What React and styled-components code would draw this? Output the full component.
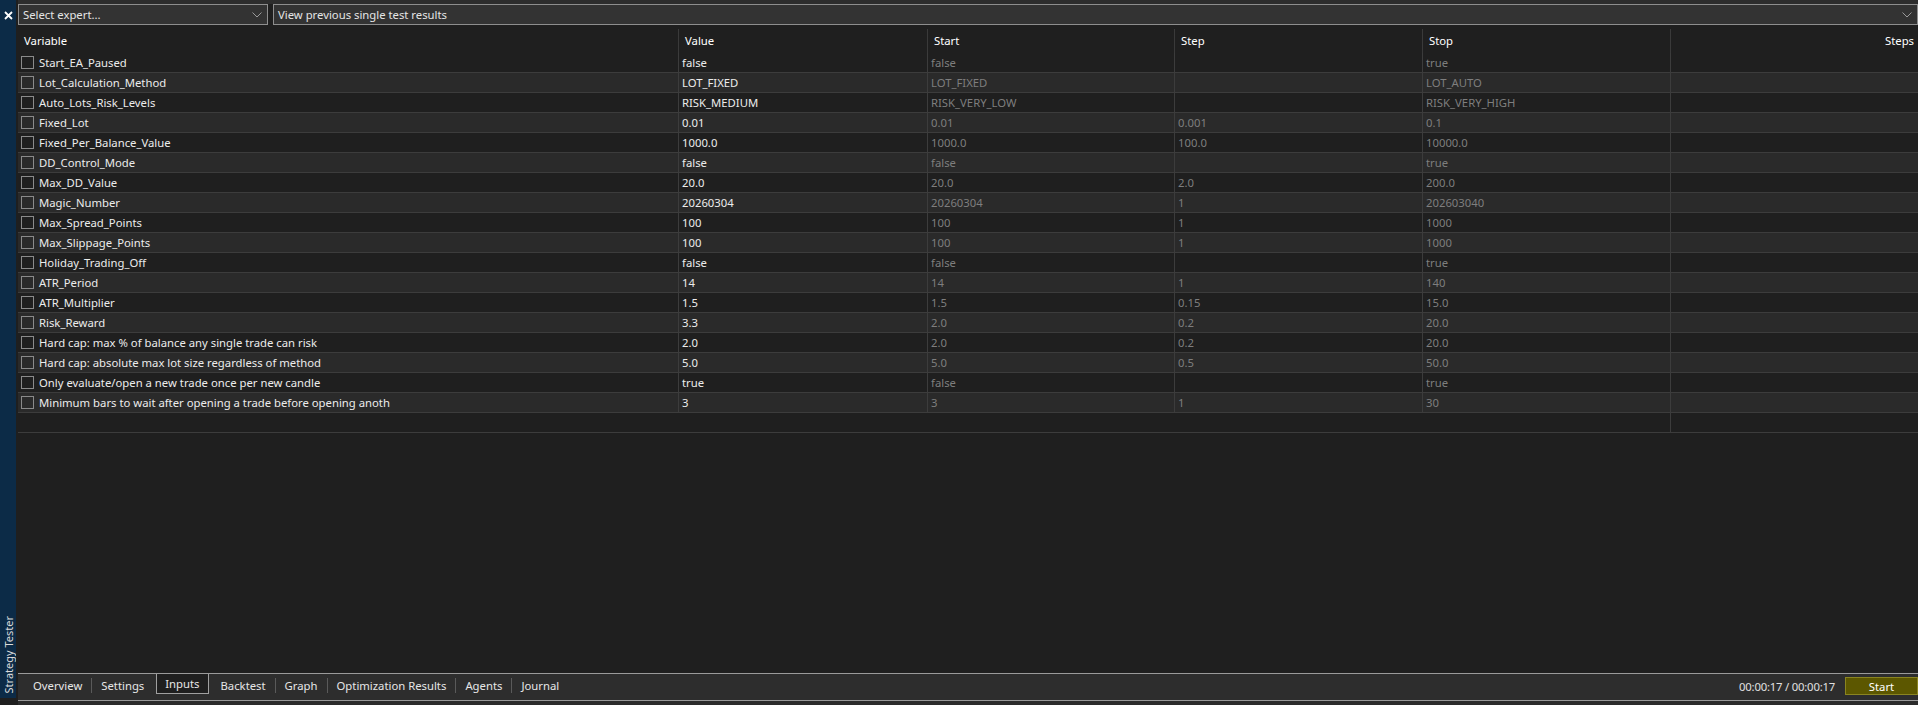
import React from "react";
import styled, { createGlobalStyle } from "styled-components";

const GlobalStyle = createGlobalStyle`
  html, body {
    margin: 0;
    padding: 0;
    background: #1f1f1f;
    overflow: hidden;
  }
  body {
    font-family: "Noto Sans", "Open Sans", sans-serif;
    font-size: 11.3px;
    color: #e8e8e8;
  }
`;

const COLS = "660px 249px 247px 248px 248px 1fr";

const rows = [
  ["Start_EA_Paused", "false", "false", "", "true"],
  ["Lot_Calculation_Method", "LOT_FIXED", "LOT_FIXED", "", "LOT_AUTO"],
  ["Auto_Lots_Risk_Levels", "RISK_MEDIUM", "RISK_VERY_LOW", "", "RISK_VERY_HIGH"],
  ["Fixed_Lot", "0.01", "0.01", "0.001", "0.1"],
  ["Fixed_Per_Balance_Value", "1000.0", "1000.0", "100.0", "10000.0"],
  ["DD_Control_Mode", "false", "false", "", "true"],
  ["Max_DD_Value", "20.0", "20.0", "2.0", "200.0"],
  ["Magic_Number", "20260304", "20260304", "1", "202603040"],
  ["Max_Spread_Points", "100", "100", "1", "1000"],
  ["Max_Slippage_Points", "100", "100", "1", "1000"],
  ["Holiday_Trading_Off", "false", "false", "", "true"],
  ["ATR_Period", "14", "14", "1", "140"],
  ["ATR_Multiplier", "1.5", "1.5", "0.15", "15.0"],
  ["Risk_Reward", "3.3", "2.0", "0.2", "20.0"],
  ["Hard cap: max % of balance any single trade can risk", "2.0", "2.0", "0.2", "20.0"],
  ["Hard cap: absolute max lot size regardless of method", "5.0", "5.0", "0.5", "50.0"],
  ["Only evaluate/open a new trade once per new candle", "true", "false", "", "true"],
  ["Minimum bars to wait after opening a trade before opening anoth", "3", "3", "1", "30"],
];

const tabs = ["Overview", "Settings", "Inputs", "Backtest", "Graph", "Optimization Results", "Agents", "Journal"];
const ACTIVE = "Inputs";

export default function App() {
  return (
    <>
      <GlobalStyle />
      <Page>
        <Sidebar>
          <CloseBtn>
            <svg width="9" height="9" viewBox="0 0 9 9">
              <path d="M1 1 L8 8 M8 1 L1 8" stroke="#ffffff" strokeWidth="1.8" />
            </svg>
          </CloseBtn>
          <SideLabel>Strategy Tester</SideLabel>
        </Sidebar>

        <Main>
          <Toolbar>
            <Select width="250px">
              <span>Select expert...</span>
              <Chevron />
            </Select>
            <Select grow>
              <span>View previous single test results</span>
              <Chevron />
            </Select>
          </Toolbar>

          <Table>
            <HeaderRow>
              <HeadCell first>Variable</HeadCell>
              <HeadCell>Value</HeadCell>
              <HeadCell>Start</HeadCell>
              <HeadCell>Step</HeadCell>
              <HeadCell>Stop</HeadCell>
              <HeadCell right>Steps</HeadCell>
            </HeaderRow>

            {rows.map((r, i) => (
              <Row key={r[0]} alt={i % 2 === 1}>
                <VarCell>
                  <Check />
                  {r[0]}
                </VarCell>
                <Cell>{r[1]}</Cell>
                <Cell dim>{r[2]}</Cell>
                <Cell dim>{r[3]}</Cell>
                <Cell dim>{r[4]}</Cell>
                <Cell />
              </Row>
            ))}

            <Row>
              <Cell bare />
              <Cell bare />
              <Cell bare />
              <Cell bare />
              <Cell bare />
              <Cell />
            </Row>
          </Table>

          <TabBar>
            <Tabs>
              {tabs.map((t, i) => {
                const prev = tabs[i - 1];
                const showSep = i > 0 && t !== ACTIVE && prev !== ACTIVE;
                return (
                  <React.Fragment key={t}>
                    {showSep && <TabSep />}
                    <Tab active={t === ACTIVE}>{t}</Tab>
                  </React.Fragment>
                );
              })}
            </Tabs>
            <Timer>00:00:17 / 00:00:17</Timer>
            <StartButton>Start</StartButton>
          </TabBar>
          <BottomStrip />
        </Main>
      </Page>
    </>
  );
}

const Chevron = () => (
  <ChevronWrap>
    <svg width="10" height="6" viewBox="0 0 10 6">
      <path d="M0.5 0.5 L5 5 L9.5 0.5" fill="none" stroke="#9a9a9a" strokeWidth="1" />
    </svg>
  </ChevronWrap>
);

const Page = styled.div`
  display: flex;
  width: 1918px;
  height: 705px;
  background: #1f1f1f;
`;

const Sidebar = styled.div`
  width: 16px;
  height: 698px;
  flex-shrink: 0;
  background: #0c2b47;
  display: flex;
  flex-direction: column;
  align-items: center;
  justify-content: space-between;
`;

const CloseBtn = styled.div`
  margin-top: 11px;
  width: 9px;
  height: 9px;
  display: flex;
`;

const SideLabel = styled.div`
  writing-mode: vertical-rl;
  transform: rotate(180deg);
  font-size: 11px;
  color: #dcdcdc;
  margin-bottom: 5px;
  white-space: nowrap;
`;

const Main = styled.div`
  flex: 1;
  margin-left: 2px;
  display: flex;
  flex-direction: column;
  min-width: 0;
`;

const Toolbar = styled.div`
  display: flex;
  gap: 5px;
  height: 21px;
  padding-top: 4px;
  background: linear-gradient(#2d2d2d 0 4px, #1f1f1f 4px);
  border-bottom: 1px solid #1f1f1f;
`;

const Select = styled.div`
  display: flex;
  align-items: center;
  justify-content: space-between;
  width: ${(p) => p.width || "auto"};
  flex: ${(p) => (p.grow ? 1 : "none")};
  height: 21px;
  box-sizing: border-box;
  border: 1px solid #8e8e8e;
  background: #333333;
  padding: 0 4px 0 4px;
  color: #e4e4e4;
`;

const ChevronWrap = styled.span`
  display: flex;
  margin-right: 1px;
`;

const Table = styled.div`
  flex: 1;
  display: flex;
  flex-direction: column;
`;

const HeaderRow = styled.div`
  display: grid;
  grid-template-columns: ${COLS};
  height: 27px;
`;

const HeadCell = styled.div`
  margin-top: 3px;
  border-left: ${(p) => (p.first ? "none" : "1px solid #3a3a3a")};
  padding: 0 ${(p) => (p.right ? "4px" : "0")} 2px 6px;
  display: flex;
  align-items: center;
  justify-content: ${(p) => (p.right ? "flex-end" : "flex-start")};
  color: #ffffff;
`;

const Row = styled.div`
  display: grid;
  grid-template-columns: ${COLS};
  height: 20px;
  box-sizing: border-box;
  border-bottom: 1px solid #3c3c3c;
  background: ${(p) => (p.alt ? "#2a2a2a" : "#1f1f1f")};
`;

const Cell = styled.div`
  border-left: ${(p) => (p.bare ? "none" : "1px solid #3c3c3c")};
  padding-left: 3px;
  display: flex;
  align-items: center;
  white-space: nowrap;
  overflow: hidden;
  color: ${(p) => (p.dim ? "#7e7e7e" : "#ececec")};
`;

const VarCell = styled.div`
  display: flex;
  align-items: center;
  gap: 5px;
  padding-left: 3px;
  white-space: nowrap;
  overflow: hidden;
  color: #ececec;
`;

const Check = styled.span`
  width: 13px;
  height: 13px;
  box-sizing: border-box;
  border: 1px solid #8a8a8a;
  flex-shrink: 0;
`;

const TabBar = styled.div`
  display: flex;
  align-items: flex-start;
  height: 28px;
  box-sizing: border-box;
  background: #2d2d2d;
  border-top: 1px solid #9a9a9a;
  border-bottom: 1px solid #9a9a9a;
`;

const Tabs = styled.div`
  display: flex;
  align-items: flex-start;
  padding-left: 6px;
  flex: 1;
`;

const Tab = styled.div`
  height: 20px;
  padding: 0 ${(p) => (p.active ? "8px" : "9px")};
  margin: ${(p) => (p.active ? "0 3px" : "1px 0 0")};
  box-sizing: border-box;
  display: flex;
  align-items: center;
  color: #e6e6e6;
  background: ${(p) => (p.active ? "#1f1f1f" : "transparent")};
  border: ${(p) => (p.active ? "1px solid #a0a0a0" : "none")};
  border-top: none;
`;

const TabSep = styled.span`
  width: 1px;
  height: 15px;
  margin-top: 4px;
  background: #5a5a5a;
`;

const Timer = styled.div`
  margin-top: 3px;
  margin-right: 10px;
  height: 18px;
  display: flex;
  align-items: center;
  color: #e0e0e0;
  letter-spacing: -0.2px;
`;

const StartButton = styled.div`
  margin-top: 3px;
  width: 73px;
  height: 18px;
  box-sizing: border-box;
  background: #5c5700;
  border: 1px solid #8a8420;
  color: #ffffff;
  display: flex;
  align-items: center;
  justify-content: center;
`;

const BottomStrip = styled.div`
  height: 4px;
  background: #2b2b2b;
`;
